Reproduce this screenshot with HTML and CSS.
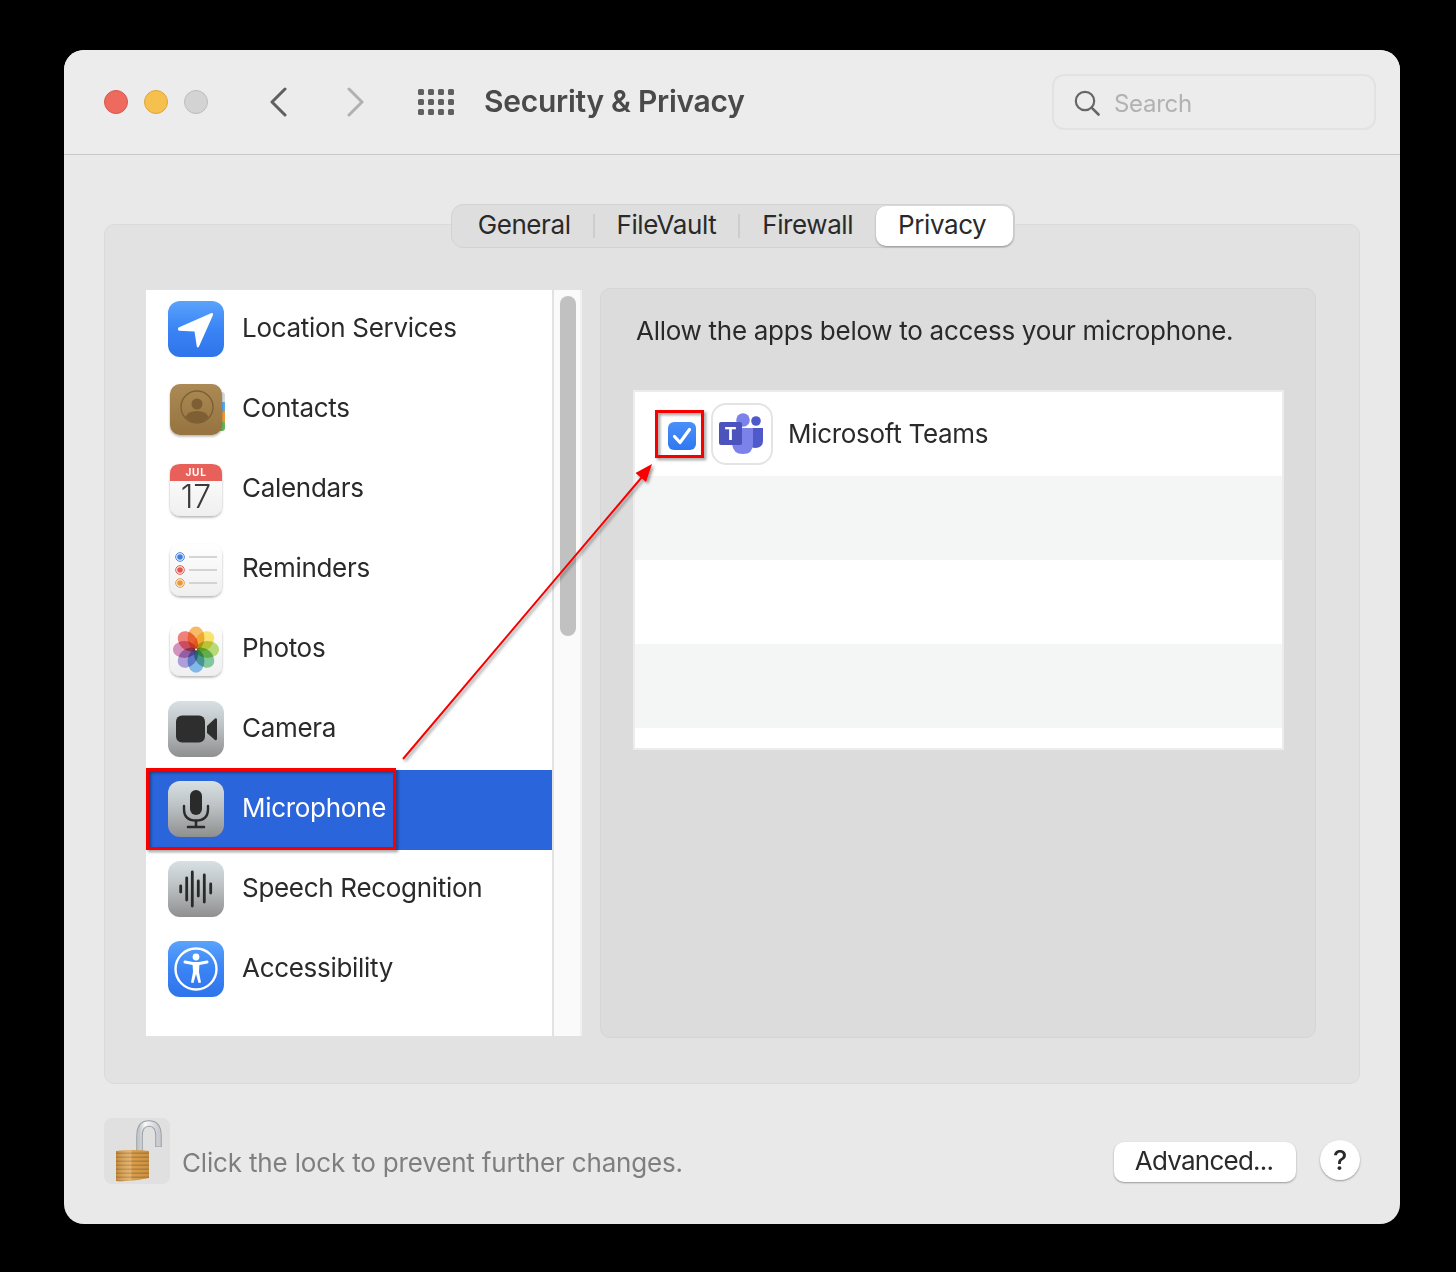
FILE: index.html
```html
<!DOCTYPE html>
<html lang="en">
<head>
<meta charset="utf-8">
<title>Security &amp; Privacy</title>
<link rel="stylesheet" href="styles.css">
</head>
<body>
<svg class="defs" width="0" height="0" aria-hidden="true">
  <defs>
    <linearGradient id="gBlue" x1="0" y1="0" x2="0" y2="1"><stop offset="0" stop-color="#5aa3fb"/><stop offset=".5" stop-color="#3a84f6"/><stop offset="1" stop-color="#2f74ea"/></linearGradient>
    <linearGradient id="gGrey" x1="0" y1="0" x2="0" y2="1"><stop offset="0" stop-color="#d8e0e4"/><stop offset=".45" stop-color="#bcc2c4"/><stop offset="1" stop-color="#8f8f8f"/></linearGradient>
    <linearGradient id="gWhite" x1="0" y1="0" x2="0" y2="1"><stop offset="0" stop-color="#ffffff"/><stop offset="1" stop-color="#efefef"/></linearGradient>
    <linearGradient id="gBrown" x1="0" y1="0" x2="0" y2="1"><stop offset="0" stop-color="#ab8a55"/><stop offset="1" stop-color="#96733f"/></linearGradient>
    <linearGradient id="gSilver" x1="0" y1="0" x2="1" y2="0"><stop offset="0" stop-color="#c3c8cc"/><stop offset=".3" stop-color="#f7f9fa"/><stop offset="1" stop-color="#c8ccd0"/></linearGradient>
    <pattern id="pGold" width="33" height="4" patternUnits="userSpaceOnUse"><rect width="33" height="2.2" fill="#e3a54e"/><rect y="2.2" width="33" height="1.8" fill="#c4862f"/></pattern>
    <linearGradient id="gGoldShade" x1="0" y1="0" x2="1" y2="0"><stop offset="0" stop-color="#7a4a10" stop-opacity=".3"/><stop offset=".45" stop-color="#fff" stop-opacity=".16"/><stop offset=".5" stop-color="#7a4a10" stop-opacity=".08"/><stop offset="1" stop-color="#7a4a10" stop-opacity=".22"/></linearGradient>
    <filter id="fShadow" x="-20%" y="-20%" width="140%" height="140%"><feDropShadow dx="0" dy="1.500" stdDeviation="1" flood-color="#000" flood-opacity=".3"/></filter>
    <filter id="fAnno" x="-10%" y="-10%" width="120%" height="120%"><feDropShadow dx="2" dy="2" stdDeviation="1.5" flood-color="#000" flood-opacity=".4"/></filter>
  </defs>
</svg>

<main class="window">
  <header class="titlebar">
    <div class="lights">
      <span class="light light-red"></span>
      <span class="light light-yellow"></span>
      <span class="light light-grey"></span>
    </div>
    <nav class="nav">
      <svg class="chev" width="20" height="30" viewBox="0 0 20 30"><path d="M17 2 L4 15 L17 28" fill="none" stroke="#5f5f5f" stroke-width="3" stroke-linecap="round" stroke-linejoin="round"/></svg>
      <svg class="chev" width="20" height="30" viewBox="0 0 20 30"><path d="M3 2 L16 15 L3 28" fill="none" stroke="#b1b1b1" stroke-width="3" stroke-linecap="round" stroke-linejoin="round"/></svg>
    </nav>
    <div class="grid-icon">
      <i></i><i></i><i></i><i></i><i></i><i></i><i></i><i></i><i></i><i></i><i></i><i></i>
    </div>
    <h1 class="title">Security &amp; Privacy</h1>
    <div class="search">
      <svg width="26" height="26" viewBox="0 0 26 26"><circle cx="11" cy="11" r="9.200" fill="none" stroke="#666" stroke-width="2.200"/><path d="M17.600 17.600 L24.500 24.500" stroke="#666" stroke-width="2.600" stroke-linecap="round"/></svg>
      <span class="search-text">Search</span>
    </div>
  </header>

  <section class="content">
    <div class="tabs">
      <span class="tab">General</span><span class="sep"></span>
      <span class="tab">FileVault</span><span class="sep"></span>
      <span class="tab">Firewall</span>
      <span class="tab tab-active">Privacy</span>
    </div>

    <div class="panel">
      <div class="list-wrap">
        <ul class="list">
          <li class="row">
            <svg class="icon" viewBox="0 0 56 56"><rect x="0" y="0" width="56" height="56" rx="12" fill="url(#gBlue)"/><path d="M10.500 26.500 L43 12.200 Q45.500 11.500 45 14 L31 45.500 Q29.500 47.500 28.800 45.500 L26.500 30.500 L11 29.800 Q9 28.500 10.500 26.500Z" fill="#fff"/></svg>
            <span class="label">Location Services</span>
          </li>
          <li class="row">
            <svg class="icon" viewBox="0 0 56 56"><g transform="translate(0 2)"><path d="M50 9h4q3 0 3 3v7h-7z" fill="#d9d9d9"/><path d="M50 19h7v10h-7z" fill="#5fa8e0"/><path d="M50 29h7v10h-7z" fill="#ec9a35"/><path d="M50 39h7v6q0 3-3 3h-4z" fill="#6cb558"/><rect x="2" y="1" width="52" height="51" rx="10" fill="url(#gBrown)" filter="url(#fShadow)"/><circle cx="29" cy="24" r="16" fill="none" stroke="#7d5f33" stroke-width="1.400"/><circle cx="29" cy="21" r="5.500" fill="#7d5f33"/><path d="M17.500 34 Q20 28 29 28 Q38 28 40.500 34 Q36 39.500 29 39.500 Q22 39.500 17.500 34Z" fill="#7d5f33"/></g></svg>
            <span class="label">Contacts</span>
          </li>
          <li class="row">
            <svg class="icon" viewBox="0 0 56 56"><g transform="translate(0 2)"><g filter="url(#fShadow)"><rect x="2" y="1" width="52" height="52" rx="10" fill="url(#gWhite)"/><path d="M2 18 V11 Q2 1 12 1 H44 Q54 1 54 11 V18Z" fill="#e8605a"/></g><text class="cal-month" x="28" y="13" text-anchor="middle">JUL</text><text class="cal-day" x="28" y="45" text-anchor="middle">17</text></g></svg>
            <span class="label">Calendars</span>
          </li>
          <li class="row">
            <svg class="icon" viewBox="0 0 56 56"><g transform="translate(0 2)"><rect x="2" y="1" width="52" height="52" rx="10" fill="url(#gWhite)" filter="url(#fShadow)"/><g fill="none" stroke-width="1"><circle cx="12" cy="14" r="4.300" stroke="#3f7fe0"/><circle cx="12" cy="27" r="4.300" stroke="#e2564c"/><circle cx="12" cy="40" r="4.300" stroke="#e9983a"/></g><circle cx="12" cy="14" r="2.800" fill="#3f7fe0"/><circle cx="12" cy="27" r="2.800" fill="#e2564c"/><circle cx="12" cy="40" r="2.800" fill="#e9983a"/><g stroke="#c9c9c9" stroke-width="1.400"><path d="M21 14H49M21 27H49M21 40H49"/></g></g></svg>
            <span class="label">Reminders</span>
          </li>
          <li class="row">
            <svg class="icon" viewBox="0 0 56 56"><rect x="2" y="3" width="52" height="52" rx="10" fill="url(#gWhite)" filter="url(#fShadow)"/><g class="petals">
              <ellipse cx="28" cy="17" rx="8.500" ry="11.500" fill="#f5a83c"/>
              <ellipse cx="28" cy="17" rx="8.500" ry="11.500" fill="#f8dc48" transform="rotate(45 28 28.500)"/>
              <ellipse cx="28" cy="17" rx="8.500" ry="11.500" fill="#a6d152" transform="rotate(90 28 28.500)"/>
              <ellipse cx="28" cy="17" rx="8.500" ry="11.500" fill="#62bb82" transform="rotate(135 28 28.500)"/>
              <ellipse cx="28" cy="17" rx="8.500" ry="11.500" fill="#62a8e4" transform="rotate(180 28 28.500)"/>
              <ellipse cx="28" cy="17" rx="8.500" ry="11.500" fill="#9a86d0" transform="rotate(225 28 28.500)"/>
              <ellipse cx="28" cy="17" rx="8.500" ry="11.500" fill="#cb74ad" transform="rotate(270 28 28.500)"/>
              <ellipse cx="28" cy="17" rx="8.500" ry="11.500" fill="#ec5f55" transform="rotate(315 28 28.500)"/></g><circle cx="28" cy="28.500" r="1" fill="#fff"/></svg>
            <span class="label">Photos</span>
          </li>
          <li class="row">
            <svg class="icon" viewBox="0 0 56 56"><rect width="56" height="56" rx="12" fill="url(#gGrey)"/><rect x="8" y="14.500" width="29" height="27" rx="6" fill="#2e2e2e"/><path d="M39 25 L47 17.500 Q49 16.500 49 19 V37.500 Q49 40 47 39 L39 32Z" fill="#2e2e2e"/></svg>
            <span class="label">Camera</span>
          </li>
          <li class="row row-selected">
            <svg class="icon" viewBox="0 0 56 56"><rect width="56" height="56" rx="12" fill="url(#gGrey)"/><rect x="22" y="9" width="12" height="25" rx="6" fill="#2a2a2a"/><path d="M16 25 V28 Q16 39.500 28 39.500 Q40 39.500 40 28 V25" fill="none" stroke="#2a2a2a" stroke-width="2.400" stroke-linecap="round"/><path d="M28 40 V45 M20 46 H36" stroke="#2a2a2a" stroke-width="2.600" stroke-linecap="round"/></svg>
            <span class="label">Microphone</span>
          </li>
          <li class="row">
            <svg class="icon" viewBox="0 0 56 56"><rect width="56" height="56" rx="12" fill="url(#gGrey)"/><g stroke="#2a2a2a" stroke-width="2.800" stroke-linecap="round"><path d="M12.700 25V31M18.700 17V39M24.300 11V45M30.300 20V35M36.300 14V41M42.700 23V32"/></g></svg>
            <span class="label">Speech Recognition</span>
          </li>
          <li class="row">
            <svg class="icon" viewBox="0 0 56 56"><rect width="56" height="56" rx="12" fill="url(#gBlue)"/><circle cx="28" cy="28" r="20.500" fill="none" stroke="#fff" stroke-width="2.400"/><circle cx="28" cy="16" r="3.400" fill="#fff"/><path d="M17 21 L25 22.500 H31 L39 21" fill="none" stroke="#fff" stroke-width="3" stroke-linecap="round" stroke-linejoin="round"/><path d="M24.500 22H31.500L31 31L33 41.500L30.500 42L28 33L25.500 42L23 41.500L25 31Z" fill="#fff"/></svg>
            <span class="label">Accessibility</span>
          </li>
        </ul>
        <div class="scrollbar"><div class="thumb"></div></div>
      </div>

      <div class="pane">
        <p class="pane-text">Allow the apps below to access your microphone.</p>
        <div class="table">
          <div class="tr app-row">
            <span class="checkbox"><svg width="24" height="24" viewBox="0 0 24 24"><path d="M4.500 12.500 L10 18.500 L19.500 5.500" fill="none" stroke="#fff" stroke-width="3.200" stroke-linecap="round" stroke-linejoin="round"/></svg></span>
            <svg class="teams" width="62" height="62" viewBox="0 0 62 62"><rect x="1" y="1" width="60" height="60" rx="14" fill="#fff" stroke="#e4e4e4" stroke-width="2"/><circle cx="45" cy="18" r="4.800" fill="#5059c9"/><path d="M37 25H52V38Q52 44 45 45Q39 45 37 40Z" fill="#5059c9"/><circle cx="32" cy="17" r="6.800" fill="#7b83eb"/><path d="M21 25H42V41Q42 51 32 51Q22 51 21 41Z" fill="#7b83eb"/><rect x="8" y="19" width="23" height="23" rx="2" fill="#4b53bc"/><text class="teams-t" x="19.500" y="37" text-anchor="middle">T</text></svg>
            <span class="app-name">Microsoft Teams</span>
          </div>
          <div class="tr tr-alt"></div>
          <div class="tr"></div>
          <div class="tr tr-alt"></div>
          <div class="tr tr-end"></div>
        </div>
      </div>
    </div>

    <footer class="footer">
      <div class="lock">
        <svg width="66" height="66" viewBox="0 0 66 66"><path d="M35.500 33 V18 Q35.500 5.500 45 5.500 Q54.500 5.500 54.500 18 V29" fill="none" stroke="#9a9ea2" stroke-width="6.500"/><path d="M35.500 33 V18 Q35.500 5.500 45 5.500 Q54.500 5.500 54.500 18 V28.500" fill="none" stroke="url(#gSilver)" stroke-width="4.500"/><path d="M12 33 Q28 31 45 33 V60 Q28 64 12 63Z" fill="url(#pGold)"/><path d="M12 33 Q28 31 45 33 V60 Q28 64 12 63Z" fill="url(#gGoldShade)"/></svg>
      </div>
      <span class="lock-text">Click the lock to prevent further changes.</span>
      <button class="btn" type="button">Advanced...</button>
      <button class="help" type="button">?</button>
    </footer>
  </section>
</main>

<svg class="annotations" width="1456" height="1272" viewBox="0 0 1456 1272" aria-hidden="true">
  <g filter="url(#fAnno)">
    <rect x="147.500" y="769.500" width="247" height="79" fill="none" stroke="#f80000" stroke-width="3"/>
    <rect x="656.500" y="411.500" width="46" height="45" fill="none" stroke="#f80000" stroke-width="3"/>
    <path d="M403 759 L642 477" stroke="#f80000" stroke-width="2" fill="none"/>
    <path d="M652 464 L646 482 L635.500 473Z" fill="#f80000"/>
  </g>
</svg>
</body>
</html>
```

FILE: styles.css
```css
* { box-sizing: border-box; }
html, body { margin: 0; padding: 0; }
body {
  width: 1456px;
  height: 1272px;
  background: #000;
  font-family: Inter, "Liberation Sans", sans-serif;
  color: #2a2a2a;
  overflow: hidden;
  position: relative;
}
.defs { position: absolute; }
.window {
  width: 1336px;
  height: 1174px;
  margin: 50px 0 0 64px;
  background: #e9e9e9;
  border-radius: 20px;
  overflow: hidden;
  display: flex;
  flex-direction: column;
}
.titlebar {
  height: 105px;
  flex: none;
  display: flex;
  align-items: center;
  padding: 0 24px 0 40px;
  background: #ececec;
  border-bottom: 1px solid #c8c8c8;
}
.lights { display: flex; gap: 16px; }
.light { width: 24px; height: 24px; border-radius: 50%; border: 1px solid; display: block; }
.light-red { background: #ee6a5f; border-color: #d9564c; }
.light-yellow { background: #f6c04f; border-color: #dfa53a; }
.light-grey { background: #d3d3d3; border-color: #bcbcbc; }
.nav { display: flex; gap: 58px; margin-left: 60px; }
.chev { display: block; }
.grid-icon {
  margin-left: 52px;
  display: grid;
  grid-template-columns: repeat(4, 6px);
  grid-auto-rows: 6px;
  gap: 4px 4px;
}
.grid-icon i { background: #606060; border-radius: 1.5px; display: block; }
.title {
  margin: 0 0 2px 30px;
  font-size: 30px;
  font-weight: 600;
  color: #4a4a4a;
  letter-spacing: -0.28px;
  white-space: nowrap;
}
.search {
  margin-left: auto;
  width: 324px;
  height: 56px;
  border: 2px solid #e2e2e2;
  border-radius: 12px;
  display: flex;
  align-items: center;
  padding: 2px 0 0 20px;
  gap: 14px;
}
.search-text { font-size: 24px; color: #b2b2b2; letter-spacing: -0.3px; }
.content {
  flex: 1;
  padding: 49px 40px 0;
  display: flex;
  flex-direction: column;
  position: relative;
}
.tabs {
  align-self: center;
  height: 44px;
  display: flex;
  align-items: center;
  background: #dedede;
  border: 1px solid #d2d2d2;
  border-radius: 12px;
  margin: 0 0 -24px 2px;
  position: relative;
  z-index: 1;
  padding: 0 1px 0 26px;
  font-size: 26px;
  letter-spacing: -0.42px;
  color: #2a2a2a;
}
.tab { line-height: 38px; height: 40px; white-space: nowrap; }
.sep { width: 2px; height: 24px; background: #cdcdcd; margin: 0 22px; }
.tab-active {
  background: #fff;
  border-radius: 10px;
  padding: 0 27px 0 22px;
  margin-left: 23px;
  box-shadow: 0 1px 2px rgba(0,0,0,.35);
}
.panel {
  height: 860px;
  flex: none;
  background: #e2e2e2;
  border: 1px solid #dadada;
  border-radius: 10px;
  padding: 63px 43px 0 41px;
  display: flex;
  align-items: flex-start;
  gap: 18px;
}
.list-wrap {
  width: 436px;
  height: 746px;
  flex: none;
  display: flex;
  background: #fff;
  margin-top: 2px;
}
.list { list-style: none; margin: 0; padding: 0; width: 406px; flex: none; }
.row {
  height: 80px;
  display: flex;
  align-items: center;
  padding: 0 0 2px 22px;
  gap: 18px;
  font-size: 26px;
  letter-spacing: -0.3px;
  color: #2a2a2a;
}
.row-selected { background: #2a65dc; color: #fff; }
.icon { width: 56px; height: 56px; flex: none; display: block; overflow: visible; }
.label { white-space: nowrap; margin-bottom: 4px; }
.petals ellipse { mix-blend-mode: multiply; opacity: .78; }
.petals { isolation: isolate; }
.cal-month { font: 700 10px Inter, sans-serif; fill: #fff; letter-spacing: .8px; }
.cal-day { font: 300 32px Inter, sans-serif; fill: #3a3a3a; letter-spacing: 0; }
.scrollbar {
  flex: 1;
  background: #fafafa;
  border-left: 2px solid #e2e2e2;
  border-right: 2px solid #f0f0f0;
  padding: 6px 4px 0 6px;
}
.thumb { height: 340px; background: #c1c1c1; border-radius: 8px; }
.pane {
  flex: 1;
  height: 750px;
  background: #dcdcdc;
  border: 1px solid #d5d5d5;
  border-radius: 10px;
  padding: 0 31px 0 32px;
}
.pane-text { margin: 26px 0 0 3px; font-size: 26px; line-height: 32px; letter-spacing: -0.28px; color: #2a2a2a; white-space: nowrap; }
.table {
  margin-top: 43px;
  height: 360px;
  border: 2px solid #ececec;
  background: #fff;
}
.tr { height: 84px; }
.tr-alt { background: #f4f5f5; }
.tr-end { height: 20px; }
.app-row { display: flex; align-items: center; padding-left: 33px; }
.checkbox {
  width: 28px;
  height: 28px;
  border-radius: 6px;
  background: linear-gradient(#4a90fa, #2f78f0);
  display: flex;
  align-items: center;
  justify-content: center;
  margin-top: 3px;
}
.teams { margin-left: 15px; flex: none; display: block; }
.teams-t { font: 700 18px Inter, sans-serif; fill: #fff; }
.app-name { margin: 0 0 2px 15px; font-size: 26px; letter-spacing: -0.3px; color: #2a2a2a; white-space: nowrap; }
.footer {
  margin-top: 34px;
  display: flex;
  align-items: flex-start;
}
.lock { width: 66px; height: 66px; background: #e0e0e0; border-radius: 8px; flex: none; }
.lock svg { display: block; }
.lock-text { margin: 29px 0 0 12px; font-size: 26px; line-height: 32px; letter-spacing: -0.17px; color: #7f7f7f; white-space: nowrap; }
.btn {
  margin: 24px 0 0 auto;
  width: 182px;
  height: 40px;
  border: 0;
  border-radius: 10px;
  background: #fff;
  box-shadow: 0 1px 2px rgba(0,0,0,.35);
  font: 400 26px Inter, sans-serif;
  letter-spacing: -0.75px;
  color: #2a2a2a;
  padding: 0 2px 3px 0;
}
.help {
  margin: 22px 0 0 24px;
  width: 40px;
  height: 40px;
  border: 0;
  border-radius: 50%;
  background: #fff;
  box-shadow: 0 1px 2px rgba(0,0,0,.35);
  font: 500 27px Inter, sans-serif;
  color: #2a2a2a;
  padding: 0;
}
.annotations { position: absolute; left: 0; top: 0; pointer-events: none; }
```
